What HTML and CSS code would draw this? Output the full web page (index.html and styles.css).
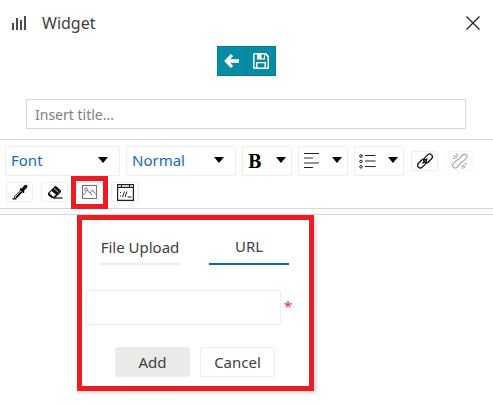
FILE: index.html
```
<!DOCTYPE html>
<html lang="en">
<head>
<meta charset="utf-8">
<title>Widget</title>
<link rel="stylesheet" href="styles.css">
</head>
<body>
<header class="header">
  <svg class="bars" width="15" height="14" viewBox="0 0 15 14"><path d="M1 7v7M5 2v12M9 4v10M13 0v14" stroke="#4c4c4c" stroke-width="2"/></svg>
  <h1 class="heading">Widget</h1>
  <svg class="close" width="14" height="14" viewBox="0 0 14 14"><path d="M.5.5l13 13M13.5.5l-13 13" stroke="#222" stroke-width="1.3"/></svg>
</header>
<div class="actions">
  <button class="action" aria-label="Back"><svg width="16" height="16" viewBox="0 0 16 16"><path d="M15 8H3M8 2L2.500 8L8 14" fill="none" stroke="#fff" stroke-width="3.300"/></svg></button>
  <button class="action" aria-label="Save"><svg width="16" height="16" viewBox="0 0 16 16"><path fill="#fff" fill-rule="evenodd" d="M1 0h12l3 3v12l-1 1H1l-1-1V1zM1.500 1.500v13H3V9h10v5.500h1.500V4L12 1.500V6.500H4v-5zM4.500 10.300v4.200h7v-4.200zM8.500 1.500v3.700H11V1.500z"/></svg></button>
</div>
<input class="title-input" type="text" placeholder="Insert title...">
<div class="toolbar">
  <div class="tool-row">
    <button class="select font"><span class="label">Font</span><i class="caret"></i></button>
    <button class="select normal"><span class="label">Normal</span><i class="caret"></i></button>
    <button class="select small"><b class="bold">B</b><i class="caret"></i></button>
    <button class="select small" aria-label="Align"><svg width="16" height="16" viewBox="0 0 16 16"><path d="M0 .5h15M0 14.500h9" stroke="#222"/><path d="M0 5h9M0 10h15" stroke="#777" stroke-width="1.300"/></svg><i class="caret"></i></button>
    <button class="select small list" aria-label="List"><svg width="17" height="15" viewBox="0 0 17 15"><g fill="none" stroke="#222"><circle cx="2" cy="2" r="1.300"/><circle cx="2" cy="7.500" r="1.300"/><circle cx="2" cy="12.800" r="1.300"/><path d="M6 1.500h10.500M6 7h10.500M6 12.500h10.500"/></g></svg><i class="caret"></i></button>
    <button class="tool link" aria-label="Link"><svg width="16" height="16" viewBox="0 0 16 16"><g fill="none" stroke="#111" stroke-width="1.300"><rect x="6" y="2.700" width="10" height="5.400" rx="2.700" transform="rotate(-45 11 5.400)"/><rect x="0" y="7.900" width="10" height="5.400" rx="2.700" transform="rotate(-45 5 10.600)"/><path d="M5.500 10.500l5-5"/></g></svg></button>
    <button class="tool unlink" aria-label="Unlink"><svg width="16" height="16" viewBox="0 0 16 16"><g fill="none" stroke="#aaa" stroke-width="1.200"><path d="M7 6l3.500-4q2-1.800 3.700-.3q1.600 1.800-.1 3.600L11 8.500q-1.400 1-3 .2M9 10l-4 4.200q-2 1.600-3.700.2q-1.500-1.800.1-3.800l3-3.100q1.500-1.300 3-.4M1 2.500l4 2M4.500.5l1 3M.5 5.500h3M10.500 12l3 2.500M10 13l.5 3M12 11h3"/></g></svg></button>
  </div>
  <div class="tool-row second">
    <button class="tool" aria-label="Color"><svg width="16" height="16" viewBox="0 0 16 16"><path d="M2.500 12.500L9 6l1.500 1.500L4 14H2.500z" fill="#fff" stroke="#111" stroke-width=".8"/><path d="M3.500 12.700l5.500-5.500 1.500 1L5 14zM7.500 5l1-1 1.200.6L12.500 1.300q1.500-1 2.500 0t0 2.500L12 6.800l.5 1.400-1 1zM.5 14.200h4v1.200h-4z"/></svg></button>
    <button class="tool" aria-label="Clear"><svg width="16" height="16" viewBox="0 0 16 16"><path d="M1 9L7.500 2.500q1-1 2 0l4 3.500q1.200 1.200 0 2.500L8 14H4.500L1 11z" fill="#111"/><path d="M2 9.300l2.700-2.600L9.200 10.500l-2.700 2.700zM1.800 11l3 2.400" fill="#fff" stroke="#111" stroke-width=".7"/><path d="M7.200 4.500l4.300 3.800" stroke="#fff" stroke-width=".8"/><path d="M6 14h9.500" stroke="#111" stroke-width="1.200"/></svg></button>
    <button class="tool image" aria-label="Image"><svg width="15" height="14" viewBox="0 0 15 14"><g fill="none" stroke="#666" stroke-width=".9"><rect x=".5" y=".5" width="14" height="13"/><circle cx="4" cy="4.500" r="1.500"/><path d="M1 10l3.500-3M5.200 5.500L10 10M8 8l2.500-3L14 9.500"/></g></svg></button>
    <button class="tool code" aria-label="Source"><svg width="17" height="17" viewBox="0 0 17 17"><g fill="none" stroke="#222"><path d="M.6.500h15.800v15.900H.6z" stroke-width="1.200"/><path d="M1 3.500h15"/><path d="M1 2h15" stroke="#bbb" stroke-width="1.500"/><path d="M4.500 1v2M12.500 1v2"/><path d="M3.500 8v1M3.500 11.500v1M5.500 13l2-5.500M8 13l2-5.500M10.500 13h4"/></g></svg></button>
  </div>
</div>
<div class="editor">
  <form class="popup">
    <div class="tabs"><span class="tab">File Upload</span><span class="tab active">URL</span></div>
    <div class="field"><input class="url" type="text" aria-label="URL"><span class="required">*</span></div>
    <div class="buttons"><button type="button" class="btn add">Add</button><button type="button" class="btn">Cancel</button></div>
  </form>
</div>
</body>
</html>
```
FILE: styles.css
```
* { box-sizing: border-box; }
body {
  margin: 0;
  height: 404px;
  overflow: hidden;
  background: #fff;
  color: #404040;
  font: 15px/20px "Noto Sans", sans-serif;
}
button, input { font: inherit; color: inherit; margin: 0; padding: 0; background: #fff; outline: 0; }
svg { display: block; flex: none; }
.header { display: flex; align-items: center; height: 46px; padding: 0 13px 0 12px; }
.heading { margin: 0 0 0 15px; font-size: 16px; font-weight: 400; }
.close { margin-left: auto; }
.actions { display: flex; justify-content: center; height: 30px; }
.action {
  display: flex;
  align-items: center;
  justify-content: center;
  width: 30px;
  background: #078ca5;
  border: 1px solid #067d94;
}
.action + .action { margin-left: -1px; }
.title-input {
  display: block;
  width: 440px;
  height: 30px;
  margin: 23px 0 10px 26px;
  padding: 1px 8px 0;
  border: 1px solid #d8d8d8;
  font-size: 14px;
}
.title-input::placeholder { color: #808080; opacity: 1; }
.toolbar { height: 70px; border: solid #d8d8d8; border-width: 1px 0; padding: 6px 0 0 5px; }
.tool-row { display: flex; align-items: center; gap: 6px; height: 30px; }
.select, .tool { display: flex; align-items: center; border: 1px solid #eee; border-radius: 2px; }
.select { justify-content: space-between; height: 30px; padding: 0 5px; color: #1769c4; }
.label { padding-bottom: 2px; }
.font { width: 115px; padding-right: 11px; }
.normal { width: 110px; padding-right: 11px; }
.small { width: 50px; }
.list { padding-left: 4px; }
.caret { border: solid transparent; border-width: 6px 5px 0; border-top-color: #000; margin-top: -3px; }
.bold { padding-top: 3px; color: #000; font: 700 21px/20px "Liberation Mono", monospace; }
.bold { font-family: "DejaVu Serif", serif; font-stretch: condensed; font-size: 18px; padding-top: 1px; }
.tool { justify-content: center; width: 27px; height: 20px; }
.link { margin-left: 1px; }
.unlink { margin-left: 2px; border-color: #f7f7f7; }
.second { height: 20px; margin-top: 6px; padding-left: 1px; gap: 8px; }
.image { position: relative; }
.image::after { content: ""; position: absolute; inset: -7px -6px -8px; border: 5px solid #ed1c24; }
.code { width: 28px; }
.editor { margin-top: 5px; border-top: 1px solid #d8d8d8; }
.popup {
  width: 237px;
  height: 176px;
  margin-left: 77px;
  padding: 16px 0 0 4px;
  border: 5px solid #ed1c24;
  box-shadow: 2px 2px 4px rgba(0, 0, 0, .15);
}
.tabs { display: flex; gap: 29px; padding-left: 14px; }
.tab { width: 80px; height: 29px; border-bottom: 2px solid #eee; text-align: center; white-space: nowrap; line-height: 22px; }
.active { border-color: #0b67b8; line-height: 20px; }
.field { display: flex; margin-top: 25px; }
.url { width: 195px; height: 35px; border: 1px solid #eee; border-radius: 2px; }
.required { margin: 6px 0 0 3px; color: #f22; font-size: 15px; }
.buttons { display: flex; gap: 10px; margin: 22px 0 0 29px; }
.btn { width: 75px; height: 30px; border: 1px solid #eee; border-radius: 2px; }
.add { background: #ebeae9; }
```
